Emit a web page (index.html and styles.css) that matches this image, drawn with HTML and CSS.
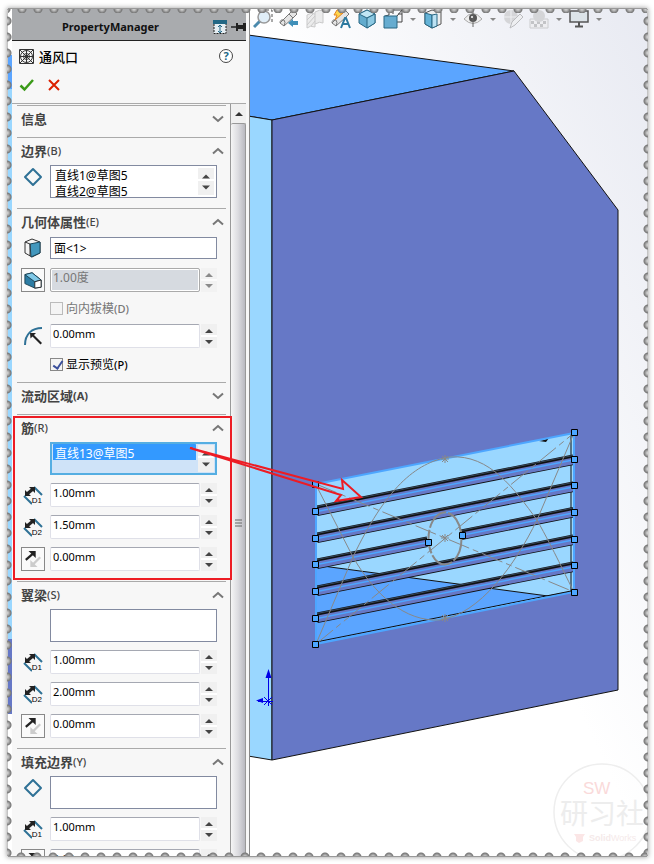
FILE: index.html
```html
<!DOCTYPE html>
<html lang="zh-CN">
<head>
    <meta charset="UTF-8">
    <title>PropertyManager</title>
    <link rel="stylesheet" href="styles.css">
</head>
<body>
    <!-- shared icons -->
    <svg class="defs" aria-hidden="true">
        <symbol id="i-up" viewBox="0 0 12 8"><path d="M1 6.500 6 2l5 4.500" fill="none" stroke="#777" stroke-width="2"/></symbol>
        <symbol id="i-down" viewBox="0 0 12 8"><path d="M1 1.500 6 6l5-4.500" fill="none" stroke="#777" stroke-width="2"/></symbol>
        <symbol id="i-diamond" viewBox="0 0 20 20"><path d="M10 2 18 10 10 18 2 10Z" fill="none" stroke="#2f7196" stroke-width="2" stroke-linejoin="round"/></symbol>
        <symbol id="i-dim" viewBox="0 0 20 20">
            <path d="M1 11 9 19M11 2l8 8" stroke="#2f7196" stroke-width="2"/>
            <path d="M4 9 10 4" stroke="#222" stroke-width="3"/>
            <path d="M2 11V5l6 6ZM12 2v6L6 2Z" fill="#222"/>
        </symbol>
        <symbol id="i-flip" viewBox="0 0 20 20">
            <path d="M2 11 10 4" stroke="#222" stroke-width="2.500"/>
            <path d="M5 1h8v8Z" fill="#222"/>
            <path d="M18 8 10 16" stroke="#ccc" stroke-width="2.500"/>
            <path d="M7 19v-8l8 8Z" fill="#ccc"/>
        </symbol>
        <symbol id="i-spin" viewBox="0 0 16 24">
            <path d="M8 5l4 4H4ZM4 16h8l-4 4Z" fill="#444"/>
        </symbol>
    </svg>

    <div class="sheet">
        <aside class="panel">
            <header class="panel-bar">
                <h1>PropertyManager</h1>
                <svg width="14" height="14" viewBox="0 0 14 14"><path d="M1 4v9.500h12V4" fill="#e5eef3" stroke="#222" stroke-dasharray="2 1"/><path d="M0 0h14v4H0Z" fill="#226785"/><path d="M7 5v8M5 7l2-2 2 2M5 11l2 2 2-2" fill="none" stroke="#226785"/></svg>
                <svg width="15" height="12" viewBox="0 0 15 12"><path d="M0 6h6" stroke="#222" stroke-width="1.500"/><path d="M5 2h2v2h5V2h3v8h-3V8H7v2H5Z" fill="#222"/></svg>
            </header>
            <div class="feature">
                <svg width="15" height="15" viewBox="0 0 15 15"><path d="M.5.5h14v14H.5ZM1 1l13 13M14 1 1 14M7.500 1v13M1 7.500h13" fill="none" stroke="#333"/><circle cx="7.500" cy="7.500" r="6" fill="none" stroke="#333"/><circle cx="7.500" cy="7.500" r="3" fill="none" stroke="#333"/></svg>
                <h2>通风口</h2>
                <button class="help" type="button" aria-label="帮助">?</button>
            </div>
            <div class="confirm">
                <button type="button" aria-label="确定"><svg width="16" height="14" viewBox="0 0 16 14"><path d="M1.500 7.500 5.500 11.500 14 2" fill="none" stroke="#3a9a18" stroke-width="2.500"/></svg></button>
                <button type="button" aria-label="取消"><svg width="12" height="12" viewBox="0 0 12 12"><path d="M1 1l10 10M11 1 1 11" stroke="#dc2000" stroke-width="2"/></svg></button>
            </div>

            <div class="scroll-area">
                <div class="sections">
                    <section>
                        <button class="head" type="button">信息<svg><use href="#i-down"/></svg></button>
                    </section>

                    <section class="open">
                        <button class="head" type="button">边界<small>(B)</small><svg><use href="#i-up"/></svg></button>
                        <div class="row">
                            <svg class="icon"><use href="#i-diamond"/></svg>
                            <div class="list">
                                <select size="2" aria-label="边界"><option>直线1@草图5</option><option>直线2@草图5</option></select>
                                <button class="spin" type="button" aria-label="滚动"><svg><use href="#i-spin"/></svg></button>
                            </div>
                        </div>
                    </section>

                    <section class="open">
                        <button class="head" type="button">几何体属性<small>(E)</small><svg><use href="#i-up"/></svg></button>
                        <div class="row">
                            <svg class="icon" viewBox="0 0 20 20"><path d="M2 4 9 1l8 3v11l-8 4-7-4Z" fill="#f4f4f4" stroke="#333"/><path d="M7 6 17 4v11l-9 4Z" fill="#4297bd" stroke="#19475d"/><path d="M2 4l5 2v12" fill="none" stroke="#333"/></svg>
                            <input class="face" type="text" value="面&lt;1&gt;" aria-label="面">
                        </div>
                        <div class="row">
                            <button class="tool-toggle" type="button" aria-label="拔模"><svg viewBox="0 0 20 20"><path d="M1 4 9 2l10 8v8l-7 1-11-5Z" fill="#2c7ca3" stroke="#173c4e"/><path d="M1 4 9 2l10 8-7 2Z" fill="#80c9e8" stroke="#173c4e"/><path d="M12 12l7-2v8l-7 1Z" fill="#fff" stroke="#222"/></svg></button>
                            <input class="num cjk" type="text" value="1.00度" disabled aria-label="拔模角度">
                            <button class="spin" type="button" disabled aria-label="调整"><svg><use href="#i-spin"/></svg></button>
                        </div>
                        <label class="check off"><input type="checkbox" disabled>向内拔模<small>(D)</small></label>
                        <div class="row">
                            <svg class="icon" viewBox="0 0 20 20"><path d="M2 19C2 8 9 2 19 2" fill="none" stroke="#2f7196" stroke-width="2"/><path d="M7 7h6l-2 2 8 8-1.500 1.500-8-8-2 2Z" fill="#222"/></svg>
                            <input class="num" type="text" value="0.00mm" aria-label="圆角半径">
                            <button class="spin" type="button" aria-label="调整"><svg><use href="#i-spin"/></svg></button>
                        </div>
                        <label class="check"><input type="checkbox" checked>显示预览<small>(P)</small></label>
                    </section>

                    <section>
                        <button class="head" type="button">流动区域<small class="strong">(A)</small><svg><use href="#i-down"/></svg></button>
                    </section>

                    <section class="open marked">
                        <button class="head" type="button">筋<small>(R)</small><svg><use href="#i-up"/></svg></button>
                        <div class="row">
                            <span class="icon"></span>
                            <div class="list active">
                                <select size="2" aria-label="筋"><option selected>直线13@草图5</option></select>
                                <button class="spin" type="button" aria-label="滚动"><svg><use href="#i-spin"/></svg></button>
                            </div>
                        </div>
                        <div class="row">
                            <span class="icon size"><svg><use href="#i-dim"/></svg><b>D1</b></span>
                            <input class="num" type="text" value="1.00mm" aria-label="筋深度">
                            <button class="spin" type="button" aria-label="调整"><svg><use href="#i-spin"/></svg></button>
                        </div>
                        <div class="row">
                            <span class="icon size"><svg><use href="#i-dim"/></svg><b>D2</b></span>
                            <input class="num" type="text" value="1.50mm" aria-label="筋宽度">
                            <button class="spin" type="button" aria-label="调整"><svg><use href="#i-spin"/></svg></button>
                        </div>
                        <div class="row">
                            <button class="tool-toggle" type="button" aria-label="反向"><svg><use href="#i-flip"/></svg></button>
                            <input class="num" type="text" value="0.00mm" aria-label="筋等距">
                            <button class="spin" type="button" aria-label="调整"><svg><use href="#i-spin"/></svg></button>
                        </div>
                    </section>

                    <section class="open">
                        <button class="head" type="button">翼梁<small>(S)</small><svg><use href="#i-up"/></svg></button>
                        <div class="row">
                            <span class="icon"></span>
                            <div class="list"><select size="2" aria-label="翼梁"></select></div>
                        </div>
                        <div class="row">
                            <span class="icon size"><svg><use href="#i-dim"/></svg><b>D1</b></span>
                            <input class="num" type="text" value="1.00mm" aria-label="翼梁深度">
                            <button class="spin" type="button" aria-label="调整"><svg><use href="#i-spin"/></svg></button>
                        </div>
                        <div class="row">
                            <span class="icon size"><svg><use href="#i-dim"/></svg><b>D2</b></span>
                            <input class="num" type="text" value="2.00mm" aria-label="翼梁宽度">
                            <button class="spin" type="button" aria-label="调整"><svg><use href="#i-spin"/></svg></button>
                        </div>
                        <div class="row">
                            <button class="tool-toggle" type="button" aria-label="反向"><svg><use href="#i-flip"/></svg></button>
                            <input class="num" type="text" value="0.00mm" aria-label="翼梁等距">
                            <button class="spin" type="button" aria-label="调整"><svg><use href="#i-spin"/></svg></button>
                        </div>
                    </section>

                    <section class="open">
                        <button class="head" type="button">填充边界<small>(Y)</small><svg><use href="#i-up"/></svg></button>
                        <div class="row">
                            <svg class="icon"><use href="#i-diamond"/></svg>
                            <div class="list"><select size="2" aria-label="填充边界"></select></div>
                        </div>
                        <div class="row">
                            <span class="icon size"><svg><use href="#i-dim"/></svg><b>D1</b></span>
                            <input class="num" type="text" value="1.00mm" aria-label="支撑区域深度">
                            <button class="spin" type="button" aria-label="调整"><svg><use href="#i-spin"/></svg></button>
                        </div>
                        <div class="row">
                            <button class="tool-toggle" type="button" aria-label="反向"><svg><use href="#i-flip"/></svg></button>
                            <input class="num" type="text" value="0.00mm" aria-label="支撑区域等距">
                            <button class="spin" type="button" aria-label="调整"><svg><use href="#i-spin"/></svg></button>
                        </div>
                    </section>
                </div>
                <div class="scrollbar">
                    <button type="button" aria-label="向上"><svg width="8" height="4" viewBox="0 0 8 4"><path d="M4 0l4 4H0Z" fill="#333"/></svg></button>
                    <div class="thumb"><svg width="7" height="9" viewBox="0 0 7 9"><path d="M0 1h7M0 4h7M0 7h7" stroke="#666"/></svg></div>
                </div>
            </div>
        </aside>

        <main class="viewport">
            <svg class="scene" viewBox="250 9 397 847" preserveAspectRatio="xMinYMin slice">
                <defs>
                    <linearGradient id="sky" x1="0" y1="1" x2="1" y2="0">
                        <stop offset="0.5" stop-color="#fff"/>
                        <stop offset="1" stop-color="#e8eaf2"/>
                    </linearGradient>
                    <g id="handle"><path d="M-3-3h6v6h-6Z" fill="#4da6ff" stroke="#000"/></g>
                    <g id="star"><path d="M-4 0h8M0-4v8M-3-3l6 6M3-3l-6 6" stroke="#888"/></g>
                    <g id="rib">
                        <path d="M317 507 573 456" stroke="#111" stroke-width="3"/>
                        <path d="M317 506.500 573 455.500" stroke="#5d7fa8" stroke-width="0.500"/>
                        <path d="M317 512 573 461" stroke="#111" stroke-width="8"/>
                        <path d="M317 512 573 461" stroke="#6678c6" stroke-width="6.500"/>
                        <path d="M317 511.500 573 460" stroke="#4da6ff" stroke-width="1.500"/>
                    </g>
                </defs>
                <path d="M249 9h398v847H249Z" fill="url(#sky)"/>
                <g stroke="#111" stroke-linejoin="round">
                    <path d="M248 35 514 71 272 120 248 116Z" fill="#5ba5ff"/>
                    <path d="M248 116 272 120V760L248 756Z" fill="#9ad7ff"/>
                    <path d="M272 120 514 71 618 210V690L272 760Z" fill="#6678c6"/>
                </g>
                <!-- vent opening -->
                <path d="M316 484 574 433V592L316 644Z" fill="#9ad7ff"/>
                <path d="M316 565 330 567 548 596 316 644Z" fill="#5ba5ff"/>
                <path d="M324 566 330 567 548 596 574 591M571 434V592M316 642 571 591" fill="none" stroke="#111"/>
                <path d="M539 441 544 440 549 438 546 442Z" fill="#111"/>
                <use href="#rib"/>
                <use href="#rib" y="27"/>
                <use href="#rib" y="80"/>
                <use href="#rib" y="107"/>
                <g>
                    <path d="M317 560 427 538M461 531 573 508.500" stroke="#111" stroke-width="3"/>
                    <path d="M317 559.500 427 537.500M461 530.500 573 508" stroke="#5d7fa8" stroke-width="0.500"/>
                    <path d="M317 565 427 543M461 536 573 513.500" stroke="#111" stroke-width="8"/>
                    <path d="M317 565 427 543M461 536 573 513.500" stroke="#6678c6" stroke-width="6.500"/>
                    <path d="M317 564.500 427 542.500M461 535.500 573 513" stroke="#4da6ff" stroke-width="1.500"/>
                </g>
                <path d="M316 484 574 433V592L316 644Z" fill="none" stroke="#4da6ff" stroke-width="2"/>
                <!-- sketch lines -->
                <g fill="none" stroke="#888">
                    <path d="M316 644 353 557C385 490 415 462 450 457 490 454 515 490 537 520 555 552 565 575 574 592"/>
                    <path d="M316 485 353 557C375 595 405 622 440 620 480 614 515 565 537 520L574 433"/>
                    <path d="M316 644 574 433M316 484 574 592" stroke-dasharray="22 4 6 4"/>
                    <ellipse cx="445" cy="538.500" rx="16.500" ry="26" stroke-width="2" stroke-dasharray="24 2"/>
                </g>
                <use href="#star" x="445" y="459"/>
                <use href="#star" x="445" y="538"/>
                <use href="#star" x="445" y="618"/>
                <use href="#handle" x="315.500" y="484.500"/>
                <use href="#handle" x="315.500" y="511.500"/>
                <use href="#handle" x="315.500" y="538.500"/>
                <use href="#handle" x="315.500" y="564.500"/>
                <use href="#handle" x="315.500" y="591.500"/>
                <use href="#handle" x="315.500" y="618.500"/>
                <use href="#handle" x="315.500" y="644.500"/>
                <use href="#handle" x="574.500" y="432.500"/>
                <use href="#handle" x="574.500" y="459.500"/>
                <use href="#handle" x="574.500" y="485.500"/>
                <use href="#handle" x="574.500" y="512.500"/>
                <use href="#handle" x="574.500" y="539.500"/>
                <use href="#handle" x="574.500" y="565.500"/>
                <use href="#handle" x="574.500" y="592.500"/>
                <use href="#handle" x="428.500" y="542.500"/>
                <use href="#handle" x="462.500" y="535.500"/>
                <!-- origin -->
                <path d="M268.500 701V672M268 701.500H258M264 697l8 8M272 697l-8 8M268.500 701v5M268 701.500h5" stroke="#0000e6"/>
                <path d="M268.500 669l3 9h-6ZM256 700.500l7-2.500v5Z" fill="#0000e6"/>
                <!-- watermark -->
                <circle cx="602" cy="812" r="48" fill="none" stroke="#eee" stroke-width="1.500"/>
                <text class="wm-sw" x="583" y="794">SW</text>
                <text class="wm-cn" x="560" y="824">研习社</text>
                <path d="M574 834h11l-2 3v4l-4 2-3-2v-4Z" fill="#fbe6e6"/>
                <text class="wm-en" x="589" y="841"><tspan>Solid</tspan>Works</text>
            </svg>

            <nav class="toolbar">
                <button type="button" aria-label="局部放大"><svg viewBox="0 0 20 20"><path d="M8 1h11v14" fill="none" stroke="#555" stroke-dasharray="3 2"/><path d="M1 18 7 12" stroke="#4c8bad" stroke-width="3"/><circle cx="11" cy="8" r="6" fill="#e0eef8" stroke="#999" stroke-width="1.500"/></svg></button>
                <button type="button" aria-label="上一视图"><svg viewBox="0 0 20 20"><path d="M1 14 10 5l4-4 4 4-4 4-9 8Z" fill="#e4e4e4" stroke="#777"/><path d="M1 14q0-4 4-3 2 2 0 6M10 5l4 4" fill="none" stroke="#777"/><path d="M9 14l5-4v2h5v4h-5v2Z" fill="#3f8fb8"/></svg></button>
                <button class="dim" type="button" aria-label="剖面视图"><svg viewBox="0 0 20 20"><path d="M2 6q4-3 8-1V3q5-3 8-1v12q-3-2-8 1v3q-5-2-8 1Z" fill="#ddd" stroke="#999"/><path d="M2 11l6-6M2 16l8-9M6 17l4-5M10 5v10" stroke="#999"/></svg></button>
                <button type="button" aria-label="动态注解视图"><svg viewBox="0 0 20 20"><path d="M1 14 10 5l4-4 4 4-4 4-9 8Z" fill="#e4e4e4" stroke="#777"/><path d="M1 14q0-4 4-3 2 2 0 6" fill="none" stroke="#777"/><path d="M6 1h5L9 4h3l-8 7 2-5H3Z" fill="#ffd54c" stroke="#e38323"/><path d="M10 19l4-10h1l4 10M12 15h6" fill="none" stroke="#2c799f" stroke-width="2"/></svg></button>
                <button type="button" aria-label="视图定向"><svg viewBox="0 0 20 20"><path d="M10 1 18 5v9l-8 5-8-5V5Z" fill="#63acce" stroke="#286783"/><path d="M2 5 10 1l8 4-8 4Z" fill="#c0e6f5" stroke="#286783"/><path d="M10 9 18 5v9l-8 5Z" fill="#8bc8e2" stroke="#286783"/></svg></button>
                <button type="button" aria-label="前视"><svg viewBox="0 0 20 20"><path d="M6 6V1h13v12h-5M6 6l-4 1M14 7l5-6M10 1v4M15 5h4" fill="none" stroke="#444"/><path d="M1 7h13v12H1Z" fill="#66acd0" stroke="#286783"/></svg></button>
                <button class="drop" type="button" aria-label="更多"></button>
                <button type="button" aria-label="显示样式"><svg viewBox="0 0 20 20"><path d="M2 4 9 1l9 2v12l-9 4-7-4Z" fill="#eee" stroke="#555"/><path d="M2 4l7 2v13l-7-4Z" fill="#65b3d7" stroke="#286783"/><path d="M9 6l5-1v12l-5 2Z" fill="#bce2f3" stroke="#286783"/></svg></button>
                <button class="drop" type="button" aria-label="更多"></button>
                <button type="button" aria-label="隐藏/显示项目"><svg viewBox="0 0 20 20"><path d="M1 10q9-11 18 0-9 9-18 0Z" fill="#eee" stroke="#aaa"/><circle cx="10" cy="9" r="4" fill="#555"/><path d="M10 1v17" stroke="#666"/><circle cx="9" cy="8" r="1" fill="#fff"/></svg></button>
                <button class="drop" type="button" aria-label="更多"></button>
                <button class="dim" type="button" aria-label="编辑外观"><svg viewBox="0 0 20 20"><circle cx="8" cy="8" r="7" fill="#bbb"/><path d="M1 8h14M8 1v14" stroke="#eee"/><path d="M7 19l2-6 8-8 3 3-8 8Z" fill="#eee" stroke="#888"/></svg></button>
                <button class="dim" type="button" aria-label="应用布景"><svg viewBox="0 0 20 20"><path d="M1 10h18v9H1Z" fill="#eee" stroke="#aaa"/><path d="M2 12h3v3H2ZM8 12h3v3H8ZM14 12h3v3h-3ZM5 15h3v3H5ZM11 15h3v3h-3Z" fill="#999"/><circle cx="10" cy="7" r="6" fill="#bbb"/></svg></button>
                <button class="drop" type="button" aria-label="更多"></button>
                <button type="button" aria-label="视图设定"><svg viewBox="0 0 20 20"><path d="M1 2h18v11H1Z" fill="#dce3e8" stroke="#555" stroke-width="1.500"/><path d="M10 13v4M6 17.500h8" stroke="#555" stroke-width="2"/></svg></button>
                <button class="drop" type="button" aria-label="更多"></button>
            </nav>
        </main>

        <svg class="pointer" viewBox="0 0 176 60" aria-hidden="true"><path d="M2 4 155 45 154 36 173 53 148 57 153 51Z" fill="none" stroke="#ed1c24" stroke-width="2"/></svg>
    </div>

    <!-- perforated edge -->
    <i class="edge top"></i>
    <i class="edge right"></i>
    <i class="edge bottom"></i>
    <i class="edge left"></i>
</body>
</html>
```

FILE: styles.css
```css
* { box-sizing: border-box; }
body {
    margin: 0;
    height: 100vh;
    padding: 9px 7px 8px 8px;
    position: relative;
    overflow: hidden;
    background: #fff;
    font-family: "Noto Sans", "Noto Sans CJK SC", sans-serif;
    font-size: 11px;
    color: #000;
}
.defs { display: none; }
button {
    margin: 0;
    padding: 0;
    border: 0;
    background: none;
    font: inherit;
    color: inherit;
}
h1, h2 { margin: 0; }
svg { display: block; flex: none; }

.sheet {
    position: relative;
    display: flex;
    height: 100%;
    box-shadow: 0 0 5px 1px #999;
    background: linear-gradient(#fff 46px, #5ba5ff 46px, #5ba5ff 80px, #9ad7ff 80px, #9ad7ff 630px, #6678c6 630px, #6678c6 705px, #fff 705px);
    padding-left: 4px;
}

/* property panel */
.panel {
    flex: none;
    width: 237px;
    display: flex;
    flex-direction: column;
    background: #f7f7f7;
}
.panel-bar {
    display: flex;
    align-items: center;
    height: 32px;
    padding-top: 4px;
    padding-left: 50px;
    background: #a9abae;
    border-bottom: 1px solid #222;
    margin-right: 3px;
}
.panel-bar h1 {
    flex: 1;
    font: bold 11px "Noto Sans", sans-serif;
    color: #111;
}
.panel-bar svg + svg { margin: 0 0 0 4px; }
.feature {
    display: flex;
    align-items: center;
    gap: 5px;
    height: 32px;
    padding: 0 16px 2px 7px;
}
.feature h2 {
    flex: 1;
    font-size: 13px;
    font-weight: 500;
}
.help {
    width: 14px;
    height: 14px;
    border: 1px solid #444;
    border-radius: 50%;
    background: #fff;
    color: #226785;
    font-weight: bold;
    line-height: 12px;
}
.confirm {
    display: flex;
    align-items: center;
    gap: 13px;
    height: 30px;
    padding: 0 7px 6px;
}
.scroll-area {
    flex: 1;
    min-height: 0;
    display: flex;
    overflow: hidden;
    border-top: 1px solid #aaa;
    margin-right: 3px;
}
.sections {
    flex: 1;
    min-width: 0;
    padding: 1px 4px 0 5px;
}
section {
    position: relative;
    height: 32px;
    border-top: 1px solid #aaa;
}
section.open {
    height: auto;
    padding-bottom: 10px;
    display: grid;
    grid-template-columns: minmax(0, 1fr);
    gap: 8px;
}
.head {
    display: flex;
    align-items: center;
    width: 100%;
    height: 27px;
    padding: 0 2px 2px 4px;
    font-size: 13px;
    font-weight: bold;
    color: #444;
}
section.open .head { margin-bottom: -8px; }
.head svg {
    width: 12px;
    height: 8px;
    margin-left: auto;
}
small { font-size: 11px; font-weight: 500; }
.strong { font-weight: bold; }
.marked::after {
    content: "";
    position: absolute;
    inset: 1px -6px 1px -4px;
    border: 2px solid #ed1c24;
    pointer-events: none;
    z-index: 1;
}

.row {
    display: flex;
    align-items: center;
    padding: 0 9px 0 4px;
    min-height: 24px;
}
.icon {
    flex: none;
    width: 20px;
    height: 20px;
    margin: 0 7px 0 2px;
}
.row:has(.list) { align-items: flex-start; }
.row:has(.list) .icon { margin-top: 2px; }
.size { position: relative; }
.icon svg { width: 20px; height: 20px; }
.icon b {
    position: absolute;
    right: 1px;
    bottom: 0;
    font: 8px/8px "Liberation Sans", sans-serif;
    background: #f7f7f7;
}
.tool-toggle {
    flex: none;
    width: 24px;
    height: 24px;
    margin-right: 5px;
    padding: 2px;
    border: 1px solid #888;
    background: #fafafa;
}
.tool-toggle svg { width: 18px; height: 18px; }
.face, .num {
    flex: 1;
    min-width: 0;
    margin: 0;
    padding: 0 3px;
    background: #fff;
    color: #000;
    font: inherit;
}
.face {
    height: 22px;
    border: 1px solid #828aa0;
    font-size: 12px;
}
.num {
    height: 24px;
    padding: 0 2px 6px;
    border: 1px solid #dfe0e8;
    border-top-color: #a5a8b2;
    border-radius: 2px;
}
.num:disabled {
    border: 1px solid #aaa;
    box-shadow: inset 0 0 0 1px #fff;
    background: #d6dae0;
    color: #777;
}
.cjk { font-size: 12px; }
.spin {
    flex: none;
    width: 16px;
    height: 24px;
    margin-left: 1px;
    background: linear-gradient(#f0f0f0 11px, #fff 11px, #fff 13px, #f0f0f0 13px);
}
.spin svg { width: 16px; height: 24px; }
.spin:disabled { opacity: 0.6; }

.list {
    flex: 1;
    min-width: 0;
    display: flex;
    height: 33px;
    border: 1px solid #828aa0;
    background: #fff;
}
.list select {
    flex: 1;
    min-width: 0;
    margin: 0;
    padding: 0 1px;
    border: 0;
    outline: 0;
    background: none;
    overflow: hidden;
    appearance: none;
    font: 12px/16px "Noto Sans", "Noto Sans CJK SC", sans-serif;
    color: #000;
}
.list option {
    height: 16px;
    min-height: 16px;
    padding: 0 3px;
    line-height: 16px;
}
.list .spin {
    height: 27px;
    margin: 2px;
}
.list .spin svg { height: 27px; }
.list.active {
    border: 2px solid #55aee2;
    background: #cfe3f8;
}
.list.active option {
    padding: 0 2px;
    color: #fff;
    background: linear-gradient(#3399ff, #3399ff);
}
.list.active .spin { margin: 1px; }

.check {
    display: flex;
    align-items: center;
    height: 16px;
    padding-left: 33px;
    font-size: 12px;
}
.check input {
    appearance: none;
    width: 13px;
    height: 13px;
    margin: 0 3px 0 0;
    border: 1px solid #888;
    background: #f4f4f4;
}
.check input:checked::before {
    content: "";
    display: block;
    width: 4px;
    height: 8px;
    margin: 0 0 0 4px;
    border: solid #3a4f9c;
    border-width: 0 2px 2px 0;
    transform: rotate(35deg);
}
.off { color: #777; }
.off input { border-color: #bbb; }

.scrollbar {
    flex: none;
    width: 16px;
    display: flex;
    flex-direction: column;
    border-left: 1px solid #999;
    background: #f0f0f0;
}
.scrollbar button {
    display: grid;
    place-items: center;
    height: 19px;
}
.thumb {
    flex: 1;
    display: grid;
    place-items: center;
    padding-top: 66px;
    border: 1px solid #999;
    border-width: 1px 1px 0 0;
    border-radius: 2px 2px 0 0;
    background: linear-gradient(90deg, #f5f5f5, #dcdce0 50%, #b9b9c0);
}

/* model view */
.viewport {
    position: relative;
    flex: 1;
    min-width: 0;
    border-left: 1px solid #888;
    overflow: hidden;
}
.scene {
    width: 100%;
    height: 100%;
}
.wm-sw { font: 17px "Liberation Sans", sans-serif; fill: #fadada; }
.wm-cn { font: 28px "Noto Sans CJK SC", sans-serif; fill: #ededed; }
.wm-en { font: 9px "Liberation Sans", sans-serif; fill: #f5eaea; }
.wm-en tspan { font-weight: bold; }
.toolbar {
    position: absolute;
    top: 0;
    left: 0;
    display: flex;
    height: 20px;
}
.toolbar button {
    display: grid;
    place-items: center;
    width: 26px;
}
.toolbar svg { width: 20px; height: 20px; }
.toolbar .dim { opacity: 0.5; }
.toolbar .drop { width: 14px; }
.drop::before {
    content: "";
    border: 3px solid transparent;
    border-top-color: #888;
    border-bottom: 0;
}
.pointer {
    position: absolute;
    left: 180px;
    top: 435px;
    width: 176px;
    height: 60px;
}

/* round perforations every 16px */
.edge { position: absolute; pointer-events: none; }
.top, .bottom { left: 0; right: 0; height: 5px; }
.left, .right { top: 0; bottom: 0; width: 5px; }
.top {
    top: 8px;
    border-top: 1px solid #999;
    background: radial-gradient(circle at 6px 0, #ccc 1px, #777 4px, transparent 5px) 0 0 / 16px 5px;
}
.bottom {
    bottom: 7px;
    border-bottom: 1px solid #999;
    background: radial-gradient(circle at 5px 5px, #ccc 1px, #777 4px, transparent 5px) 0 0 / 16px 5px;
}
.left {
    left: 7px;
    background: radial-gradient(circle at 0 5px, #ccc 1px, #777 4px, transparent 5px) 0 0 / 5px 16px;
}
.right {
    right: 6px;
    background: radial-gradient(circle at 5px 5px, #ccc 1px, #777 4px, transparent 5px) 0 0 / 5px 16px;
}
.top, .bottom { left: 8px; right: 7px; background-position-x: -8px; }
.left, .right { top: 9px; bottom: 8px; background-position-y: -9px; }
```
